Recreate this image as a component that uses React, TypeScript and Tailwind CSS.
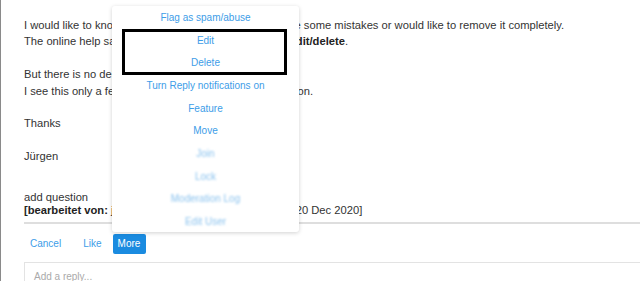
import React from "react";

const menuItems = [
  "Flag as spam/abuse",
  "Edit",
  "Delete",
  "Turn Reply notifications on",
  "Feature",
  "Move",
];

const hiddenItems = ["Join", "Lock", "Moderation Log", "Edit User"];

export default function App() {
  return (
    <div
      className="relative w-[640px] h-[281px] overflow-hidden bg-white border-l border-[#8a8a8a] text-[#333]"
      style={{ fontFamily: "'Liberation Sans', Arial, sans-serif" }}
    >
      <div className="pl-[23px] pt-[17px] text-[11.2px] leading-[16.4px]">
        <p className="whitespace-nowrap">
          I would like to know how to edit a question if I had made some mistakes or would like to remove it completely.
        </p>
        <p className="whitespace-nowrap">
          The online help says that there would be an option to <b className="font-bold text-[#222]">edit/delete</b>.
        </p>
        <p className="h-[16.4px]" />
        <p className="whitespace-nowrap">But there is no delete option for my question.</p>
        <p className="whitespace-nowrap">I see this only a few times in the community forum section.</p>
        <p className="h-[16.4px]" />
        <p>Thanks</p>
        <p className="h-[16.4px]" />
        <p>Jürgen</p>

        <div className="mt-[26px] leading-[13px]">
          <p>add question</p>
          <p className="whitespace-nowrap">
            <b className="font-bold text-[#222]">[bearbeitet von:</b> juergen.mueller1234 um 10:34 GMT, 20 Dec 2020]
          </p>
        </div>
      </div>

      <div className="ml-[23px] mt-[5px] border-t-2 border-[#dedede]" />

      <div className="ml-[23px] mt-[10px] flex items-center text-[10px]">
        <button className="ml-[6px] h-[20px] text-[#3d9de8]">Cancel</button>
        <button className="ml-[22px] h-[20px] text-[#3d9de8]">Like</button>
        <button className="ml-[11px] h-[20px] w-[33px] rounded-[2px] bg-[#1a8be0] text-white">More</button>
      </div>

      <div className="ml-[23px] mt-[8px] h-[30px] border-t border-l border-[#e3e3e3] pl-[9px] pt-[6px] text-[10px] text-[#aaa]">
        Add a reply...
      </div>

      {/* dropdown menu */}
      <div className="absolute left-[111px] top-[6px] w-[187px] h-[226px] rounded-[3px] bg-white shadow-[0_1px_4px_rgba(0,0,0,0.18)] text-[10px] text-[#3d9de8]">
        {menuItems.map((item) => (
          <div key={item} className="h-[22.7px] flex items-center justify-center whitespace-nowrap">
            {item}
          </div>
        ))}
        {hiddenItems.map((item) => (
          <div key={item} className="h-[22.7px] flex items-center justify-center whitespace-nowrap text-[#8cc3ee] blur-[1px]">
            {item}
          </div>
        ))}
      </div>

      {/* highlight box */}
      <div className="absolute left-[121px] top-[29px] w-[165px] h-[46px] border-[3px] border-black" />
    </div>
  );
}
